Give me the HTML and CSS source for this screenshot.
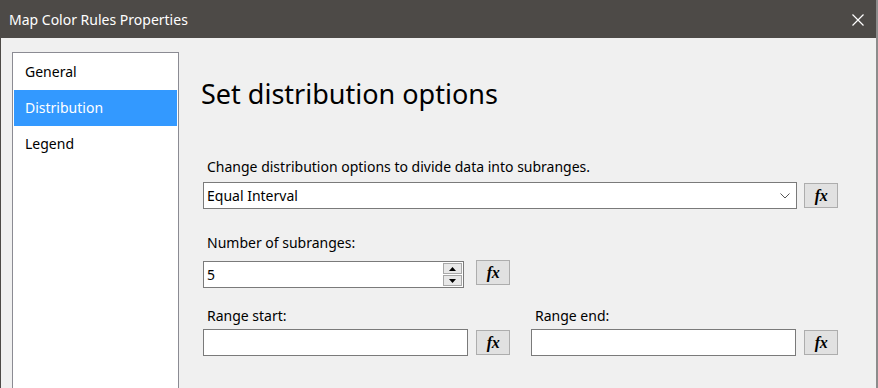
FILE: index.html
```html
<!DOCTYPE html>
<html>
<head>
<meta charset="utf-8">
<link rel="stylesheet" href="styles.css">
</head>
<body>
<div class="window">
  <div class="titlebar">
    <span class="title">Map Color Rules Properties</span>
    <svg class="close" width="12" height="12" viewBox="0 0 12 12"><path d="M0.5 0.5 L11.5 11.5 M11.5 0.5 L0.5 11.5" stroke="#fff" stroke-width="1.2" fill="none"/></svg>
  </div>
  <div class="body">
    <div class="nav">
      <div class="nav-item">General</div>
      <div class="nav-item active">Distribution</div>
      <div class="nav-item">Legend</div>
    </div>
    <div class="main">
      <h1 class="heading">Set distribution options</h1>
      <div class="label label-first">Change distribution options to divide data into subranges.</div>
      <div class="row">
        <div class="field combo">
          <span class="value">Equal Interval</span>
          <svg class="chev" width="10" height="6" viewBox="0 0 10 6"><path d="M0.5 0.5 L5 5 L9.5 0.5" stroke="#555" stroke-width="1" fill="none"/></svg>
        </div>
        <button class="fx"><i>fx</i></button>
      </div>
      <div class="label label-gap">Number of subranges:</div>
      <div class="row row-num">
        <div class="field num">
          <span class="value">5</span>
          <div class="spin">
            <div class="spin-btn"><svg width="7" height="4" viewBox="0 0 7 4"><path d="M3.5 0 L7 4 L0 4 Z" fill="#000"/></svg></div>
            <div class="spin-btn"><svg width="7" height="4" viewBox="0 0 7 4"><path d="M0 0 L7 0 L3.5 4 Z" fill="#000"/></svg></div>
          </div>
        </div>
        <button class="fx"><i>fx</i></button>
      </div>
      <div class="range-grid">
        <div class="range">
          <div class="label">Range start:</div>
          <div class="row">
            <div class="field range-input"></div>
            <button class="fx"><i>fx</i></button>
          </div>
        </div>
        <div class="range">
          <div class="label">Range end:</div>
          <div class="row">
            <div class="field range-input"></div>
            <button class="fx"><i>fx</i></button>
          </div>
        </div>
      </div>
    </div>
  </div>
</div>
</body>
</html>
```
FILE: styles.css
```css
* { box-sizing: border-box; }
html, body { margin: 0; padding: 0; }
body {
  font-family: "Noto Sans", "Open Sans", sans-serif;
  font-size: 14px;
  color: #000;
  background: #f0f0f0;
}
.window {
  width: 878px;
  height: 388px;
  background: #f0f0f0;
  border-left: 1px solid #4d4a47;
  border-right: 2px solid #8c8c8c;
  display: flex;
  flex-direction: column;
  overflow: hidden;
}
.titlebar {
  height: 38px;
  flex: none;
  background: #4d4a47;
  display: flex;
  align-items: center;
  justify-content: space-between;
  padding: 0 14px 0 9px;
  margin-left: -1px;
  margin-right: -2px;
}
.title {
  color: #fff;
  font-size: 14px;
}
.close { display: block; margin-top: 1px; }
.body {
  flex: 1;
  display: flex;
  min-height: 0;
}
.nav {
  margin: 14px 0 0 11px;
  width: 167px;
  border: 1px solid #8b8b93;
  border-bottom: none;
  background: #fff;
  padding: 1px;
  flex: none;
}
.nav-item {
  height: 36px;
  line-height: 36px;
  padding-left: 11px;
}
.nav-item.active {
  background: #3399ff;
  color: #fff;
}
.main {
  flex: 1;
  padding: 0 0 0 24px;
}
.heading {
  font-weight: normal;
  font-size: 27px;
  margin: 38px 0 0 -2px;
  line-height: 36px;
}
.label {
  padding-left: 4px;
  line-height: 20px;
  height: 20px;
}
.label-first { margin-top: 45px; margin-bottom: 5px; }
.label-gap { margin-top: 24px; margin-bottom: 8px; }
.row {
  display: flex;
  align-items: flex-start;
  gap: 7px;
}
.field {
  background: #fff;
  border: 1px solid #7a7a7a;
  display: flex;
  align-items: center;
  height: 27px;
  padding-left: 3px;
}
.combo { width: 594px; justify-content: space-between; padding-right: 6px; }
.chev { display: block; }
.num { width: 261px; height: 27px; justify-content: space-between; padding-right: 1px; }
.spin {
  display: flex;
  flex-direction: column;
  gap: 1px;
}
.spin-btn {
  width: 19px;
  height: 11px;
  background: #e8e8e8;
  border: 1px solid #a8a8a8;
  display: flex;
  align-items: center;
  justify-content: center;
}
.spin-btn svg { display: block; }
.fx {
  width: 34px;
  height: 25px;
  margin-top: 1px;
  background: #e1e1e1;
  border: 1px solid #adadad;
  padding: 0;
  font-family: "Liberation Serif", serif;
  font-weight: bold;
  font-size: 16px;
  color: #000;
  display: flex;
  align-items: center;
  justify-content: center;
}
.fx i { letter-spacing: -0.5px; }
.row-num .fx { margin-top: -1px; margin-left: 5px; }
.range .row { gap: 8px; }
.range-grid {
  display: grid;
  grid-template-columns: 328px 328px;
  margin-top: 18px;
}
.range .label { margin-bottom: 3px; }
.range-input { width: 265px; height: 27px; }
```
